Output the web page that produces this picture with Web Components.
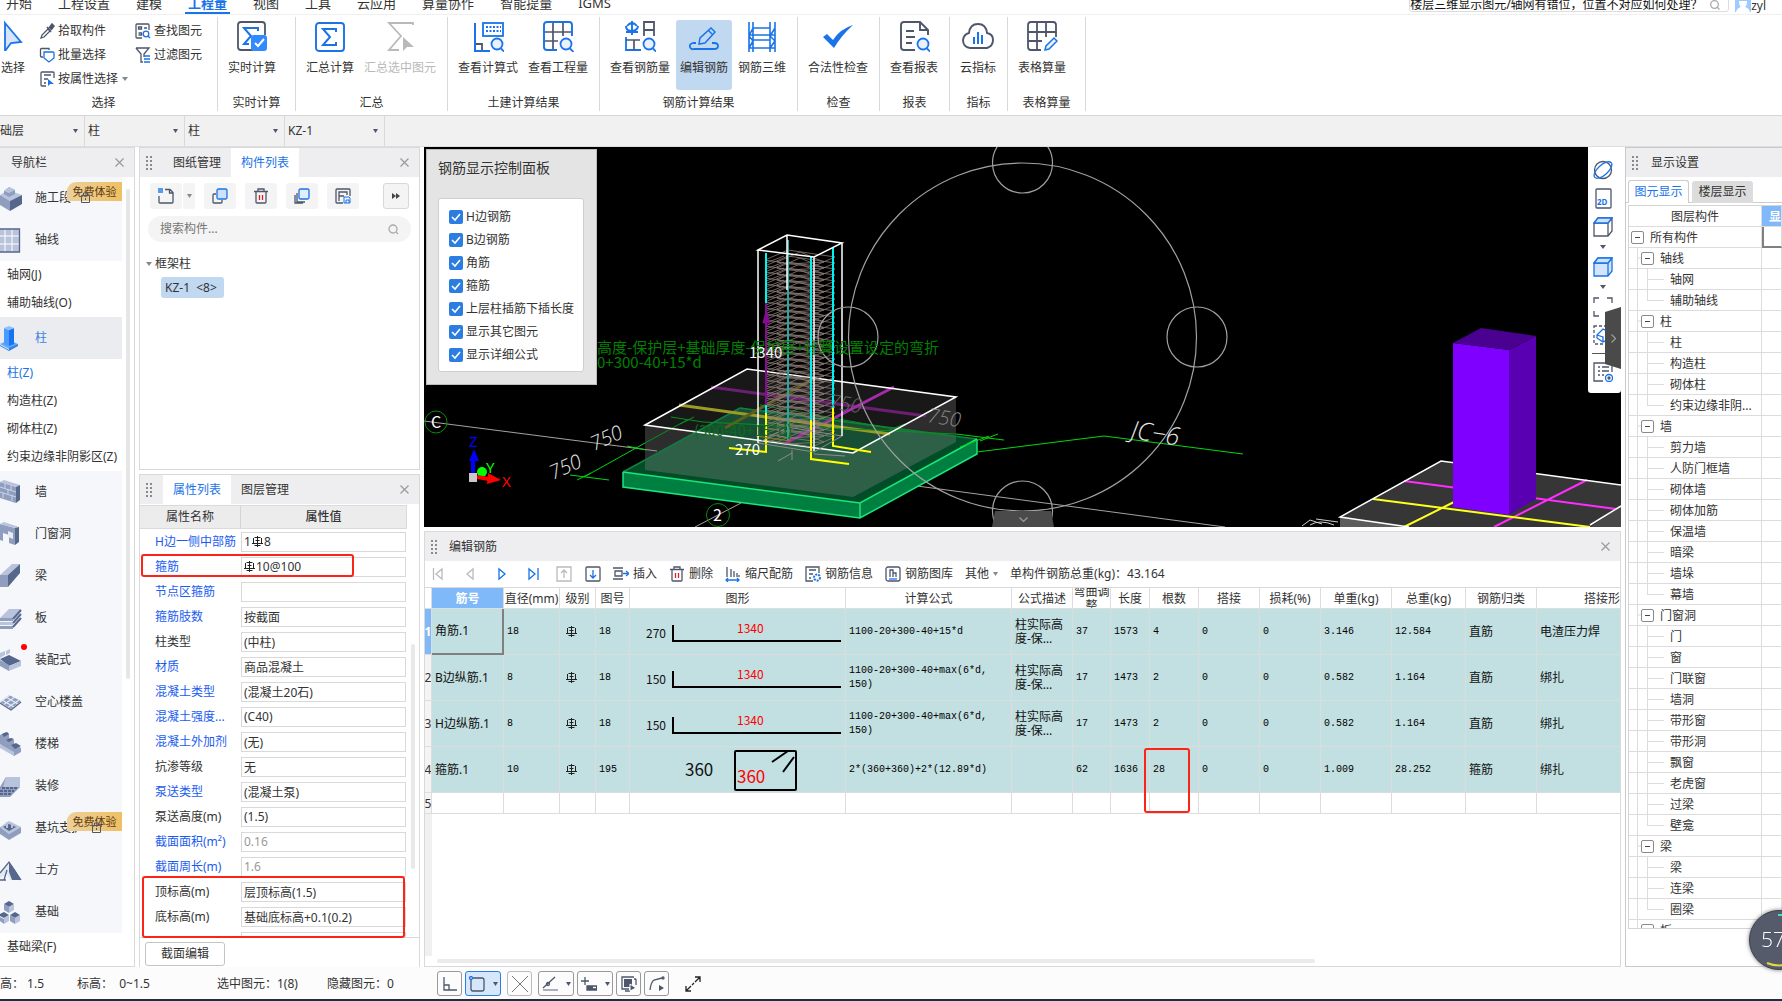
<!DOCTYPE html>
<html lang="zh-CN">
<head>
<meta charset="utf-8">
<title>编辑钢筋</title>
<style>
html,body{margin:0;height:100%;overflow:hidden}
body{font:12px/16px "Noto Sans","Noto Sans CJK SC",sans-serif;color:#333;background:#fff;
--blue:#1a73e8;--ink:#4d566b;--line:#d9d9d9;--head:#eeeef0;--sel:#c1d8f1}
</style>
</head>
<body>
<app-shell></app-shell>
<script>
const RESET=`*{box-sizing:border-box}button,input,select{font:inherit;color:inherit;background:none;border:0;padding:0;margin:0;outline:0}a{color:inherit;text-decoration:none}svg{display:block;flex:none}`;
function define(name,css,render){
  customElements.define(name,class extends HTMLElement{
    constructor(){super();this.attachShadow({mode:'open'});}
    connectedCallback(){
      this.shadowRoot.innerHTML=`<style>${RESET}${css}</style>`+(typeof render==='function'?render(this):render);
    }
  });
}
const svg=(w,h,body,extra='')=>`<svg width="${w}" height="${h}" viewBox="0 0 ${w} ${h}" fill="none" stroke="#4d566b" stroke-width="1.3" ${extra}>${body}</svg>`;
const B='#1a73e8';
const CARET=svg(7,4,'<path d="M1 0h6L4 4z" fill="#888" stroke="none"/>');
const CARET5=svg(5,4,'<path d="M0 0h5L2.500 4z" fill="#4d566b" stroke="none"/>');
const CLOSE=svg(9,9,'<path d="M.5.5l8 8M8.500.5l-8 8" stroke="#9a9a9a" stroke-width="1.200"/>');
const GRIP=svg(6,14,'<path d="M1 0v14M5 0v14" stroke="#8a8a8a" stroke-width="2" stroke-dasharray="2 2"/>');
/* rebar grade mark: barred circle standing on a line */
const REBAR=svg(11,11,'<path d="M5.500 0v11M0 7.500h11M2.500 1.500h6M2.500 9.500h6M1.500 2v5M9.500 2v5M3.500 4.500h4" stroke="#222" stroke-width="1"/>');

/* ---------- ribbon icons, 32 x 32 ---------- */
const MAG=(x,y,r=5.5)=>`<circle cx="${x}" cy="${y}" r="${r}" stroke="${B}" stroke-width="1.800" fill="#e8f1fd"/><path d="M${x+r-1.5} ${y+r-1}l3.500 3.500" stroke="${B}" stroke-width="1.800"/>`;
const BIG={
 live:`<path d="M17 30H5q-3 0-3-3V5q0-3 3-3h21q3 0 3 3v10" stroke-width="1.800"/><path d="M22 11V8H8l7 8-7 8h5" stroke="${B}" stroke-width="2"/><rect x="15" y="15" width="16" height="16" rx="3" fill="#2f8bff" stroke="none"/><path d="M19 23l3 3 6-7" stroke="#fff" stroke-width="2"/>`,
 sum:`<rect x="2" y="3" width="28" height="28" rx="3" stroke="${B}" stroke-width="1.900"/><path d="M22 12V9H9l7 8-7 8h13v-3" stroke="${B}" stroke-width="2"/>`,
 sumsel:`<path d="M29 5V3H5l12 13L5 30h10" stroke="#b9b9b9" stroke-width="1.800"/><path d="M19 17v14l4-4h7z" fill="#b9b9b9" stroke="none"/>`,
 formula:`<path d="M3 24h7v7" stroke-width="1.800"/><path d="M3 3v28h15" stroke="${B}" stroke-width="2"/><rect x="11" y="3" width="20" height="13" stroke="${B}" stroke-width="1.800"/><path d="M14 7h15M14 11h15" stroke="${B}" stroke-width="2" stroke-dasharray="2 1.500"/>`+MAG(25,24),
 qty:`<path d="M2 12h28M2 21h14M11 2v28M21 2v14" stroke-width="1.700"/><path d="M15 30H5q-3 0-3-3V5q0-3 3-3h22q3 0 3 3v11" stroke="${B}" stroke-width="1.900"/>`+MAG(24,24),
 steel:`<path d="M8 1v14M2 6q0 5 6 5M14 6q0 4-6 5M3 6q5-6 10 0M2 12h12" stroke="${B}" stroke-width="1.900"/><path d="M20 16V2h10v14M20 10h10" stroke-width="1.800"/><path d="M2 17v13h15" stroke="${B}" stroke-width="1.800"/><path d="M2 20h14M10 20v10" stroke-width="1.700"/>`+MAG(25,24),
 edit:`<path d="M8 23H5q-4 1-3 4t4 2h20q4 0 4-3t-4-3h-2" stroke="${B}" stroke-width="1.800"/><path d="M11 24l1-6L23 8l4 4-10 11zM20 10l4 4" stroke="${B}" stroke-width="1.500"/>`,
 three:`<path d="M3 2v30M7 2v30M24 2v30M29 2v30M7 8h17M3 15h26M7 20h17M3 28h26M7 8l-4 8 4 5-4 7M29 8l-5 8 5 5-5 7" stroke="${B}" stroke-width="1.600"/>`,
 check:`<path d="M1 17l4-3 6 6Q18 9 31 5 19 16 12 28z" fill="${B}" stroke="none"/>`,
 report:`<path d="M17 30H6q-3 0-3-3V5q0-3 3-3h16l8 8v5M22 2v8h8M8 11h8M8 17h9M8 23h6" stroke-width="1.900"/>`+MAG(25,24),
 cloud:`<path d="M8 28q-7-1-7-8 1-6 6-7 1-9 9-9t9 9q6 1 6 7t-6 8z" stroke-width="1.900"/><path d="M12 17v7M16 12v12M20 15v9" stroke="${B}" stroke-width="2"/>`,
 table:`<path d="M15 30H5q-3 0-3-3V5q0-3 3-3h22q3 0 3 3v12M2 12h28M2 21h14M11 2v28M20 2v15" stroke-width="1.800"/><path d="M19 30l1-4 8-8 3 3-8 8z" stroke="${B}" stroke-width="1.500" fill="#e8f1fd"/>`
};
const SMALL={
 pick:`<path d="M2 15l1-3 6-6 2 2-6 6z" stroke-width="1.300"/><path d="M8 4l4 5M10 5l3-4 2 2-3 4" stroke-width="1.500" fill="#4d566b"/>`,
 batch:`<path d="M10 3V1.500H2.500q-1 0-1 1V9q0 1 1 1H4"/><path d="M5 5h9q1 0 1 1v5l-5 4-5-4z" stroke="${B}" fill="#fff"/>`,
 prop:`<path d="M7 15H3q-1 0-1-1V2q0-1 1-1h11q1 0 1 1v5M5 4h7M5 8h4M5 12h2"/><path d="M9 8v7l2-2h4z" fill="${B}" stroke="none"/>`,
 find:`<path d="M7 15H2q-1 0-1-1V2q0-1 1-1h11q1 0 1 1v5M3.500 4h3v2h-3zM9 5h3M3.500 10h3v2h-3"/><circle cx="11" cy="11" r="2.800" stroke="${B}"/><path d="M13 13l2 2" stroke="${B}"/>`,
 filter:`<path d="M1 1h13L9 7v3M1 1l5 6v8h2"/><path d="M9 9h6M9 12h6M9 15h6" stroke="${B}"/>`
};

define('top-tabs',`:host{display:flex;justify-content:space-between;height:15px;overflow:hidden;border-bottom:1px solid #f0f0f0;flex:none}
nav{display:flex;gap:26px;align-items:flex-end;padding-left:6px;font-size:13px;line-height:14px}
a{padding-bottom:4px;height:18px;margin-top:-4px;position:relative}
a.on{color:var(--blue);font-weight:600}a.on:after{content:"";position:absolute;left:-3px;right:-3px;bottom:0;height:2px;background:var(--blue)}
.right{display:flex;align-items:flex-end;padding-right:16px;gap:6px}
.box{display:flex;align-items:center;width:320px;height:20px;border:1px solid #ddd;border-radius:3px;margin-bottom:2px;padding:5px 8px 0 0}
input{flex:1;color:#111;height:16px;min-width:0}
.user{display:flex;align-items:flex-end}.user span{line-height:16px}`,
`<nav>${['开始','工程设置','建模','工程量','视图','工具','云应用','算量协作','智能提量','IGMS'].map((t,i)=>`<a href="#" class="${i==3?'on':''}">${t}</a>`).join('')}</nav>
<div class="right"><div class="box"><input aria-label="搜索" value="楼层三维显示图元/轴网有错位，位置不对应如何处理？">${svg(10,10,'<circle cx="4.500" cy="4.500" r="3.800" stroke="#aaa"/><path d="M7 7l2.500 2.500" stroke="#aaa"/>')}</div>
<div class="user">${svg(16,16,'<path d="M0 0h16v14H0z" fill="#9ecbff" stroke="none"/><path d="M4 3h8q0 5-2 6 4 1 5 5H1q1-4 5-5Q4 8 4 3z" fill="#fff" stroke="none"/>')}<span>zyl</span></div></div>`);

define('ribbon-item',`:host{display:block}button{display:flex;flex-direction:column;align-items:center;width:100%;height:70px;padding:0 4px;border-radius:3px;white-space:nowrap}
button.on{background:var(--sel)}button:disabled{color:#b9b9b9}span{margin-top:8px}`,
 h=>`<button class="${h.hasAttribute('on')?'on':''}" ${h.hasAttribute('off')?'disabled':''}>${svg(32,32,BIG[h.getAttribute('icon')])}<span><slot></slot></span></button>`);
define('ribbon-small',`:host{display:block}button{display:flex;align-items:center;gap:3px;height:24px;white-space:nowrap}`,
 h=>`<button>${svg(16,16,SMALL[h.getAttribute('icon')])}<slot></slot>${h.hasAttribute('menu')?CARET:''}</button>`);
define('ribbon-group',`:host{display:flex;flex-direction:column;border-right:1px solid var(--line);height:94px;flex:none}
div{display:flex;gap:2px;padding:3px 6px 0;height:79px}footer{text-align:center;line-height:16px}:host([wide]) footer{padding-right:10px}:host([wide]) div{padding-top:2px}`,
 h=>`<div><slot></slot></div><footer>${h.getAttribute('label')}</footer>`);
define('app-ribbon',`:host{display:flex;height:101px;padding-top:2px;border-bottom:1px solid #d4d4d4;flex:none}
.pick{display:flex;flex-direction:column;align-items:center;width:26px;gap:9px;padding-top:1px;margin-left:-6px;white-space:nowrap}
.cols{display:flex;gap:7px;margin-left:11px}`,
`<ribbon-group wide label="选择" style="width:218px"><button class="pick">${svg(22,31,`<path d="M3 3l16 19-10 1-6 8z" fill="#d6e5fb" stroke="${B}" stroke-width="1.800"/>`)}<span>选择</span></button>
<div class="cols"><div><ribbon-small icon="pick">拾取构件</ribbon-small><ribbon-small icon="batch">批量选择</ribbon-small><ribbon-small icon="prop" menu>按属性选择</ribbon-small></div>
<div><ribbon-small icon="find">查找图元</ribbon-small><ribbon-small icon="filter">过滤图元</ribbon-small></div></div></ribbon-group>
<ribbon-group label="实时计算" style="width:78px"><ribbon-item icon="live">实时计算</ribbon-item></ribbon-group>
<ribbon-group label="汇总" style="width:152px"><ribbon-item icon="sum">汇总计算</ribbon-item><ribbon-item icon="sumsel" off>汇总选中图元</ribbon-item></ribbon-group>
<ribbon-group label="土建计算结果" style="width:152px"><ribbon-item icon="formula">查看计算式</ribbon-item><ribbon-item icon="qty">查看工程量</ribbon-item></ribbon-group>
<ribbon-group label="钢筋计算结果" style="width:198px"><ribbon-item icon="steel">查看钢筋量</ribbon-item><ribbon-item icon="edit" on>编辑钢筋</ribbon-item><ribbon-item icon="three">钢筋三维</ribbon-item></ribbon-group>
<ribbon-group label="检查" style="width:82px"><ribbon-item icon="check">合法性检查</ribbon-item></ribbon-group>
<ribbon-group label="报表" style="width:70px"><ribbon-item icon="report">查看报表</ribbon-item></ribbon-group>
<ribbon-group label="指标" style="width:58px"><ribbon-item icon="cloud">云指标</ribbon-item></ribbon-group>
<ribbon-group label="表格算量" style="width:78px"><ribbon-item icon="table">表格算量</ribbon-item></ribbon-group>`);

define('selector-bar',`:host{display:flex;height:31px;background:#f1f1f1;border-bottom:1px solid #dedede;flex:none}
label{display:flex;align-items:center;width:100px;border-right:1px solid #d9d9d9;padding:0 6px 0 3px}label:first-of-type{width:85px;padding-left:0}
select{appearance:none;flex:1;min-width:0;height:20px}`,
 `${['础层','柱','柱','KZ-1'].map((t,i)=>`<label><select aria-label="${['楼层','分类','构件类型','构件'][i]}"><option>${t}</option></select>${CARET5}</label>`).join('')}`);

/* ---------- module navigation ---------- */
const D='#56678c',M='#8f9ebf',L='#b9c4dc';
const f=(d,c)=>`<path d="${d}" fill="${c}" stroke="none"/>`;
const NAV={
 stage:f('M0 9l8-5 14 5-12 6z',L)+f('M0 9l10 6v10L0 19z',M)+f('M22 9v9l-12 7V15z',D)+f('M4 5l5-4 6 3v4l-6 3-5-3z',M)+f('M4 5l5-4 6 3-6 3z',L),
 axis:f('M0 1h20v23H0z',L)+'<path d="M0 8h20M0 16h20M5 1v23M12 1v23" stroke="#fff" stroke-width="1"/><path d="M0 1h19.500v23H0" stroke="#56678c"/>',
 column:f('M0 18l9-4 9 4-9 5z','#5fa8ff')+f('M0 19l9 5v-2l9-4v2l-9 5-9-5z','#2f7fe8')+f('M4 2l5 2v16l-5-2z','#4a9bff')+f('M9 4l5-2v16l-5 2z','#1a73f0')+f('M4 2l5-2 5 2-5 2z','#8cc0ff'),
 wall:f('M0 2l16 5v16L0 18z',M)+f('M0 2l4-2 16 5-4 2z',L)+f('M16 7l4-2v15l-4 3z',D)+'<path d="M0 7l16 5M0 12l16 5M5 4v4M11 6v4M8 9v5M3 13v5M12 15v6" stroke="#dbe2f0" stroke-width=".8"/>',
 door:f('M0 2l15 4v17l-6-2v-8l-6-2v8l-3-1z',M)+f('M0 2l4-2 15 5-4 1z',L)+f('M15 6l4-1v15l-4 3z',D)+f('M8 9l5 2v6l-5-2z','#e6ebf5'),
 beam:f('M0 11L12 0h8L8 11z',L)+f('M0 11h8v12H0z',M)+f('M8 11L20 0v9L8 23z',D),
 slab:f('M0 12L9 3h12l-8 9z',L)+f('M0 12h13v3H0zM0 20h13v3H0z',M)+f('M0 16h13v3H0z',L)+'<path d="M13 13l8-9M13 17l8-9M13 21l8-9" stroke="#56678c" stroke-width="2"/>',
 precast:f('M0 11l9-4 12 6-12 5z',D)+f('M0 12l9 5v6l-9-5z',M)+f('M21 13v5l-12 5v-5z',L)+f('M0 5l5-2v4l-5 3zM6 3l4-2v4L6 7z',L),
 hollow:f('M0 12l9-7 12 6-10 8z',M)+'<path d="M2 10l12 7M6 7l12 7M3 15l12-8M0 12l10-7M7 18l12-8" stroke="#e6ebf5" stroke-width="1.200"/><path d="M0 13l11 7 10-8" stroke="#56678c"/>',
 stairs:f('M0 3l6-3 3 2v4l5 2v4l7 4v4l-7 4L0 12z',M)+f('M2 2l5-2 2 2-5 3zM6 8l5-2 3 1-5 3zM11 13l5-2 5 3-6 3z',D)+f('M0 12l14 8v4L0 16z',L),
 finish:f('M0 13L6 3h14v10L10 23H0z',M)+f('M6 3h14v10H3z',L)+'<path d="M2 14h15M0 17h14M0 20h11" stroke="#56678c" stroke-width="2" stroke-dasharray="3 1"/>',
 pit:f('M0 11l9-6 12 6-12 7z',L)+f('M0 11l9 7v6l-9-6z',M)+f('M21 11v6L9 24v-6z',M)+f('M3 11l6-3 7 3-7 4z',D)+f('M6 6h2v6H6zM11 7h2v5h-2z',L),
 earth:f('M0 14L9 4l4 6 8 12H10l-3-6-7 4z','#e3e8f2')+f('M9 4l6 8 6 10h-9L9 14z',D)+'<path d="M0 15L9 4l12 18M0 22h6M7 12l-3 10" stroke="#56678c"/>',
 base:f('M4 4l5-3 5 3-5 3z',D)+f('M4 4l5 3v6l-5-3z',M)+f('M14 4v6l-5 3V7z',L)+f('M0 14l4-2 5 3-5 3-4-2z',D)+f('M0 17l4 2v5l-4-3z',M)+f('M9 15v6l-5 3v-6z',L)+f('M10 15l5-3 5 3-5 3z',D)+f('M10 15l5 3v6l-5-3z',M)+f('M20 15v6l-5 3v-6z',L)
};
define('nav-item',`:host{display:block}a{display:flex;align-items:center;height:42px;background:#f5f7fa;position:relative;white-space:nowrap}
a.on{background:#ebecf0;color:#3f7fe6}svg.i{width:23px;margin-right:12px}
b{position:absolute;right:0;top:5px;height:19px;line-height:19px;width:55px;text-align:center;font-weight:400;font-size:11px;color:#5e3a12;background:linear-gradient(90deg,#ecd09a,#eec063);border-radius:9px 0 0 0}
.lock{position:absolute;top:15px}.dot{position:absolute;left:21px;top:5px;width:6px;height:6px;border-radius:3px;background:#f00}`,
 h=>`<a href="#" class="${h.hasAttribute('on')?'on':''}">${svg(23,25,NAV[h.getAttribute('icon')],'class="i"')}<slot></slot>${h.hasAttribute('trial')?`<b>免费体验</b>${svg(9,11,'<path d="M.5 3.500h8v7h-8zM2.500 3V1h4v2M4.500 6v2" stroke-width="1"/>',`class="lock" style="left:${h.getAttribute('trial')}px"`)}`:''}${h.hasAttribute('dot')?'<i class="dot"></i>':''}</a>`);
define('nav-sub',`:host{display:block}a{display:block;height:28px;line-height:28px;padding-left:7px;white-space:nowrap;background:#fff}a.on{color:var(--blue)}`,
 h=>`<a href="#" class="${h.hasAttribute('on')?'on':''}"><slot></slot></a>`);
define('nav-panel',`:host{display:flex;flex-direction:column;width:135px;border:1px solid var(--line);border-left:0;flex:none;background:#fff}
header{display:flex;justify-content:space-between;align-items:center;height:29px;background:var(--head);padding:0 10px 0 11px;flex:none}
.body{display:flex;gap:4px;flex:1;min-height:0;overflow:hidden}.list{width:122px}.bar{width:4px;height:490px;margin-top:12px;border-radius:2px;background:#e6e6e6}`,
`<header><span>导航栏</span><button aria-label="关闭">${CLOSE}</button></header><div class="body"><div class="list">
<nav-item icon="stage" trial="81">施工段</nav-item><nav-item icon="axis">轴线</nav-item>
<nav-sub>轴网(J)</nav-sub><nav-sub>辅助轴线(O)</nav-sub>
<nav-item icon="column" on>柱</nav-item>
<nav-sub on>柱(Z)</nav-sub><nav-sub>构造柱(Z)</nav-sub><nav-sub>砌体柱(Z)</nav-sub><nav-sub>约束边缘非阴影区(Z)</nav-sub>
${[['wall','墙'],['door','门窗洞'],['beam','梁'],['slab','板'],['precast','装配式','dot'],['hollow','空心楼盖'],['stairs','楼梯'],['finish','装修'],['pit','基坑支护','trial="92"'],['earth','土方'],['base','基础']].map(a=>`<nav-item icon="${a[0]}" ${a[2]||''}>${a[1]}</nav-item>`).join('')}
<nav-sub>基础梁(F)</nav-sub></div><div class="bar"></div></div>`);

define('tab-header',`:host{display:flex;align-items:center;height:29px;background:var(--head);padding:0 10px 0 6px;flex:none}
.tabs{display:flex;flex:1;height:100%;margin-left:11px}button.t{width:68px;height:100%}button.on{background:#fff;color:var(--blue)}`,
 h=>`${GRIP}<div class="tabs">${h.getAttribute('tabs').split(',').map((t,i)=>`<button class="t ${i==h.getAttribute('active')?'on':''}">${t}</button>`).join('')}</div><button aria-label="关闭">${CLOSE}</button>`);

define('component-panel',`:host{display:block;height:323px;border:1px solid var(--line);background:#fff;flex:none}
.tools{display:flex;gap:9px;padding:6px 10px 0}.tools button{display:flex;align-items:center;justify-content:center;width:32px;height:26px;background:#f4f4f5;border-radius:3px}
.pair{display:flex;gap:1px}.tools .dd{width:12px}.tools .more{width:26px;margin-left:auto;border:1px solid #d8d8d8}
.search{display:flex;align-items:center;height:26px;margin:7px 8px 0;padding:0 12px;border-radius:13px;background:#f4f4f4}.search input{flex:1;min-width:0}.search input::placeholder{color:#777;opacity:1}
.root{display:flex;align-items:center;gap:3px;margin:14px 0 5px 6px}.sel{display:inline-block;height:21px;line-height:21px;margin-left:21px;padding:0 4px;background:var(--sel);border-radius:3px;width:63px;white-space:pre}`,
`<tab-header tabs="图纸管理,构件列表" active="1"></tab-header><div class="tools">
<div class="pair"><button aria-label="新建">${svg(16,16,`<path d="M7 1.500h5l3 3V14q0 1-1 1H2q-1 0-1-1V8M11.500 1.500V5H15"/><path d="M0 0h5v5H0z" fill="${B}" stroke="none" opacity=".7"/>`)}</button><button class="dd" aria-label="新建菜单">${svg(5,4,'<path d="M0 0h5L2.500 4z" fill="#888" stroke="none"/>')}</button></div>
<button aria-label="复制">${svg(16,16,`<path d="M4 6H2q-1 0-1 1v7q0 1 1 1h7q1 0 1-1v-2"/><rect x="5" y="1" width="10" height="10" rx="1.500" fill="#cfe1fa" stroke="${B}"/>`)}</button>
<button aria-label="删除">${svg(16,16,'<path d="M1 3.500h14M5 3V1h6v2M3 4v10q0 1 1 1h8q1 0 1-1V4"/><path d="M6.500 7v5M9.500 7v5" stroke="#e02020"/>')}</button>
<button aria-label="层间复制">${svg(16,16,`<path d="M3 5v9h8M1 7v8h8"/><rect x="5" y="1" width="10" height="10" rx="1.500" fill="#e3eefc" stroke="${B}"/>`)}</button>
<button aria-label="存档">${svg(16,16,`<path d="M8 15H2q-1 0-1-1V2q0-1 1-1h12q1 0 1 1v6M4 13V4h8v3M4 8h5"/><path d="M9 9h5l1 1v5H9zM11 15v-3h3v3" stroke="${B}" stroke-width="1"/>`)}</button>
<button class="more" aria-label="更多">${svg(8,6,'<path d="M0 0l4 3-4 3zM4 0l4 3-4 3z" fill="#444" stroke="none"/>')}</button></div>
<div class="search"><input aria-label="搜索构件" placeholder="搜索构件...">${svg(11,11,'<circle cx="5" cy="5" r="4" stroke="#aaa"/><path d="M8 8l2 2" stroke="#aaa"/>')}</div>
<div class="root">${svg(6,4,'<path d="M0 0h6L3 4z" fill="#888" stroke="none"/>')}框架柱</div><div class="sel">KZ-1  &lt;8&gt;</div>`);

define('prop-row',`:host{display:flex;height:25px;align-items:center}
label{width:101px;padding-left:15px;white-space:nowrap;overflow:hidden}:host([link]) label{color:#1a5cf0}
.f{flex:1;min-width:0;display:flex;align-items:center;height:20px;border:1px solid var(--line);padding:0 2px;gap:1px}
input{flex:1;min-width:0;height:18px}:host([dim]) input{color:#999}`,
 h=>{const b=h.hasAttribute('bar');return `<label for="v">${h.getAttribute('name')}</label><div class="f">${b?`${h.getAttribute('bar')?`<span>${h.getAttribute('bar')}</span>`:''}${REBAR}`:''}<input id="v" value="${h.getAttribute('value')||''}"></div>`});
define('property-panel',`:host{display:flex;flex-direction:column;flex:1;min-height:0;border:1px solid var(--line);border-bottom:0;background:#fff;position:relative}
.grid{flex:1;min-height:0;display:flex;overflow:hidden;border-bottom:1px solid var(--line)}.rows{width:267px;padding-right:1px}
.h{display:flex;height:24px;line-height:22px;text-align:center;background:#ececed;border:1px solid #dadada;border-left:0;margin-right:-1px;margin-top:1px}.h span{width:101px;border-right:1px solid #d5d5d5}.h b{flex:1;font-weight:500}
.bar{width:4px;height:225px;margin:140px 0 0 4px;border-radius:2px;background:#e8e8e8}
footer{height:29px;padding:4px 5px 0}footer button{width:80px;height:24px;border:1px solid #c4c4c4;border-radius:3px}
.mark{position:absolute;border:2px solid #fb2419;border-radius:3px;pointer-events:none}`,
`<tab-header tabs="属性列表,图层管理" active="0"></tab-header><div class="grid"><div class="rows"><div class="h"><span>属性名称</span><b>属性值</b></div>
<prop-row link name="H边一侧中部筋" bar="1" value="8"></prop-row><prop-row link name="箍筋" bar value="10@100"></prop-row><prop-row link name="节点区箍筋"></prop-row><prop-row link name="箍筋肢数" value="按截面"></prop-row><prop-row name="柱类型" value="(中柱)"></prop-row><prop-row link name="材质" value="商品混凝土"></prop-row><prop-row link name="混凝土类型" value="(混凝土20石)"></prop-row><prop-row link name="混凝土强度..." value="(C40)"></prop-row><prop-row link name="混凝土外加剂" value="(无)"></prop-row><prop-row name="抗渗等级" value="无"></prop-row><prop-row link name="泵送类型" value="(混凝土泵)"></prop-row><prop-row name="泵送高度(m)" value="(1.5)"></prop-row><prop-row link dim name="截面面积(m²)" value="0.16"></prop-row><prop-row link dim name="截面周长(m)" value="1.6"></prop-row><prop-row name="顶标高(m)" value="层顶标高(1.5)"></prop-row><prop-row name="底标高(m)" value="基础底标高+0.1(0.2)"></prop-row><prop-row name=""></prop-row></div><div class="bar"></div></div>
<footer><button>截面编辑</button></footer><i class="mark" style="left:1px;top:79px;width:213px;height:23px"></i><i class="mark" style="left:2px;top:401px;width:263px;height:62px"></i>`);

/* ---------- 3D view ---------- */
function hoops(){
  let s='';
  for(let y=260;y<442;y+=6){
    s+=`M765 ${y}L812 ${y+7}L835 ${y-3}L788 ${y-10}ZM777 ${y+2}L800 ${y-8}L824 ${y+2}L788 ${y+4}ZM766 ${y+3}L784 ${y-4}`;
  }
  return s;
}
const SCENE=`<svg class="scene" viewBox="424 147 1197 380" preserveAspectRatio="xMinYMin slice" fill="none" stroke-width="1">
<path d="M424 421L657 451M917 486L1225 527M695 527L741 503" stroke="#a9a0a0"/>
<path d="M623 472L740 408L977 439L860 503Z" fill="#014d27"/><path d="M623 472L860 503V518L623 487ZM860 503L977 439V454L860 518Z" fill="#008040"/>
<path d="M645 425L853 453V497L645 470ZM853 453L956 397V442L853 497Z" fill="#8a8a8a" fill-opacity=".33"/><path d="M645 425L747 369L956 397L853 453Z" fill="#555" fill-opacity=".28"/>
<path d="M740 408L977 439M623 472L645 460" stroke="#12803f" stroke-width="1.500"/><path d="M977 439L860 503L623 472M623 472V487L860 518L977 454V439M860 503V518" stroke="#1be57b" stroke-width="1.500"/><path d="M645 460L740 408" stroke="#127a44" stroke-width="1.500"/>
<path d="M711 387L926 416" stroke="#6b1f70" stroke-width="3"/><path d="M894 387L784 444" stroke="#a62bab" stroke-width="3"/><path d="M679 405L890 434" stroke="#9d9a26" stroke-width="3"/><path d="M815 378L725 428" stroke="#5f5c20" stroke-width="3"/>
<path d="M584 477L645 443M570 475L609 480M627 446L646 450M956 434L1004 440M977 452L1104 436L1243 454M577 480L591 473M980 441L998 434M960 447L989 436" stroke="#00d80e"/>
<path d="M645 443L687 420M671 417L703 422L956 434M680 424L694 417M889 430L905 424M760 405L889 428" stroke="#0a8f1c"/>
<path d="M645 425L747 369L956 397L853 453Z" stroke="#fff" stroke-width="1.500"/>
<path d="${hoops()}" stroke="#8d7c76" stroke-width=".8"/>
<path d="M766 253V413M811 257V420M833 247V408" stroke="#00f2f2" stroke-width="2"/><path d="M788 240V440" stroke="#26a8a0" stroke-width="2"/>
<path d="M766 303V405" stroke="#8a0a96" stroke-width="2"/><path d="M763 323L766 311L770 323Z" fill="#8a0a96" stroke="#8a0a96"/>
<path d="M766 413V452L729 448M811 420V459L849 464M833 408V446L871 452" stroke="#ffff00" stroke-width="2"/><path d="M756 436L790 441V422" stroke="#927d16"/>
<path d="M758 443L814 452L842 436M758 443L786 428M787 427L842 436M792 460V450M778 461L792 453M814 454L845 456" stroke="#8c8c8c"/>
<path d="M758 250L787 235L842 243L814 257ZM758 250V443M787 235V290M814 257V451M842 243V436" stroke="#fff" stroke-width="1.500"/>
<g stroke="#a0a0a0" stroke-width="1.200"><circle cx="1022.500" cy="337" r="174"/><circle cx="1022.500" cy="163" r="30"/><circle cx="848" cy="337" r="30"/><circle cx="1197" cy="337" r="30"/><circle cx="1022.500" cy="511" r="30"/></g>
<circle cx="436" cy="422" r="11" stroke="#0a8a0a"/><circle cx="718" cy="515" r="11.500" stroke="#0a8a0a"/>
<g font-family="Noto Sans CJK SC,sans-serif" font-size="15" stroke="none"><text x="597" y="353" fill="#008000">高度-保护层+基础厚度-保护层+计算设置设定的弯折</text><text x="597" y="368" fill="#008000">0+300-40+15*d</text><text x="694" y="436" fill="#0d6a1c">(300-40+15*d)</text>
<text x="749" y="358" fill="#f4f4f4">1340</text><text x="735" y="455" fill="#fff">270</text><text x="431" y="428" fill="#fff" font-size="16">C</text><text x="713" y="521" fill="#fff" font-size="16">2</text></g>
<g font-family="Open Sans,sans-serif" font-weight="300" font-style="italic" font-size="20" stroke="none" fill="#e8e8e8"><text transform="translate(594 451) rotate(-24)">750</text><text transform="translate(553 480) rotate(-24)">750</text><text fill="#888" transform="translate(927 422) rotate(9)">750</text><text fill="#666" transform="translate(828 408) rotate(9)">750</text><text transform="translate(1130 438) rotate(9)" font-size="25">JC−6</text></g>
<path d="M473 476V460" stroke="#00f" stroke-width="4"/><path d="M469 461L474 449L479 461Z" fill="#00f"/><circle cx="482" cy="472" r="5" fill="#0f0"/><path d="M477 477L489 479" stroke="#f00" stroke-width="4"/><path d="M488 473L501 480L487 484Z" fill="#f00"/><path d="M469 473h8v9h-8z" fill="#c8c8c8"/>
<g font-family="Noto Sans,sans-serif" font-size="15" stroke="none"><text x="469" y="447" fill="#00f">Z</text><text x="486" y="473" fill="#0f0">Y</text><text x="502" y="487" fill="#f00">X</text></g>
<path d="M1340 517L1441 461L1621 485V506L1590 527H1409Z" fill="#363636"/><path d="M1340 517V527H1409Z" fill="#5c5c5c"/><path d="M1590 527L1621 506V527Z" fill="#484848"/>
<path d="M1404 481L1616 509M1587 480L1494 527" stroke="#ff2cff" stroke-width="2"/><path d="M1373 499L1590 527M1460 499L1404 527" stroke="#ffff20" stroke-width="2"/>
<path d="M1409 527L1340 517L1441 461L1621 485M1590 525L1621 506" stroke="#fff" stroke-width="1.500"/><path d="M1302 526l8-6 12 4M1316 519l22 3M1310 525q10-6 24 0" stroke="#ccc"/>
<path d="M1453 343L1509 350V515L1453 507Z" fill="#7f00ff"/><path d="M1509 350L1536 336V499L1509 515Z" fill="#5900b3"/><path d="M1453 343L1481 328L1536 336L1509 350Z" fill="#4a0091"/>
</svg>`;
const cube=(c)=>svg(20,20,`<path d="M1 6l4-5h14v13l-4 5H1zM1 6h14v13M15 6l4-5" stroke="${c?B:'#4d566b'}" fill="${c?'#d3e4fb':'none'}"/><path d="M1 6l4-5h14l-4 5z" fill="#cfe1fa" stroke="${B}"/>`);
const DOWN=svg(6,4,'<path d="M0 0h6L3 4z" fill="#4d566b" stroke="none"/>');
define('view-tools',`:host{display:flex;flex-direction:column;align-items:center;gap:8px;width:33px;height:246px;background:#fff;border-radius:0 0 3px 3px;padding:13px 3px 0 0}
button{display:flex}hr{width:22px;height:1px;background:#555;border:0;margin:0;flex:none}`,
`<button aria-label="动态观察">${svg(20,20,`<circle cx="10" cy="10" r="8.500"/><ellipse cx="10" cy="10" rx="11" ry="5" transform="rotate(-42 10 10)" stroke="${B}"/>`)}</button>
<button aria-label="二维">${svg(20,21,`<rect x="3" y="1" width="15" height="19" rx="1"/><text x="4" y="17" font-size="8" font-weight="700" fill="${B}" stroke="none" font-family="Noto Sans,sans-serif">2D</text>`)}</button>
<button aria-label="视图">${cube(0)}</button><div>${DOWN}</div>
<button aria-label="实体">${cube(1)}</button><div>${DOWN}</div>
<button aria-label="全屏">${svg(20,20,'<path d="M1 6V1h5M14 1h5v5M1 14v5h5M14 19h5v-5"/>')}</button>
<button aria-label="局部">${svg(20,20,`<rect x="1" y="1" width="18" height="18" stroke-dasharray="3 2"/><path d="M4 10l6-6 6 3v7l-6 3-6-4zM4 10l6 2v5" stroke="${B}"/>`)}</button>
<hr>
<button aria-label="显示设置">${svg(20,20,`<path d="M10 19H1V1h18v9M5 5h2M9 5h7M5 9h2M9 9h7M5 13h2M9 13h2"/><circle cx="16" cy="16" r="3.500" stroke="${B}" fill="#fff"/><circle cx="16" cy="16" r="1" fill="${B}"/>`)}</button>`);
define('rebar-options',`:host{display:block;width:171px;height:236px;background:#e4e4e4;border:1px solid #bdbdbd;padding:9px 10px}
h2{font-size:14px;font-weight:400;line-height:18px;margin:0 0 21px 1px}
div{background:#fff;border:1px solid #cfcfcf;border-radius:3px;width:146px;height:174px;padding:6px 10px;margin-left:1px}
label{display:flex;align-items:center;gap:3px;height:23px;white-space:nowrap}
input{appearance:none;width:14px;height:14px;flex:none;border-radius:2px;background:#2b7de0 url("data:image/svg+xml,%3Csvg xmlns='http://www.w3.org/2000/svg' width='14' height='14'%3E%3Cpath d='M3 7l3 3 5-6' fill='none' stroke='white' stroke-width='1.6'/%3E%3C/svg%3E")}`,
`<h2>钢筋显示控制面板</h2><div>${['H边钢筋','B边钢筋','角筋','箍筋','上层柱插筋下插长度','显示其它图元','显示详细公式'].map(t=>`<label><input type="checkbox" checked>${t}</label>`).join('')}</div>`);
define('model-view',`:host{display:block;position:relative;flex:1;min-height:0;background:#000;overflow:hidden}.scene{display:block;width:100%;height:100%}
rebar-options{position:absolute;left:2px;top:2px}view-tools{position:absolute;right:0;top:0}
.side{position:absolute;right:0;top:160px;width:16px;height:62px;background:#4a4a4a;clip-path:polygon(0 5px,100% 0,100% 100%,0 57px);display:flex;align-items:center;justify-content:center}
.down{position:absolute;left:568px;bottom:0;width:62px;height:16px;background:#4a4a4a;clip-path:polygon(3px 0,59px 0,100% 100%,0 100%);display:flex;align-items:center;justify-content:center}`,
`${SCENE}<rebar-options></rebar-options><view-tools></view-tools><button class="side" aria-label="收起">${svg(5,9,'<path d="M.5.5l4 4-4 4" stroke="#999"/>')}</button><button class="down" aria-label="展开">${svg(9,5,'<path d="M.5.5l4 4 4-4" stroke="#999"/>')}</button>`);

/* ---------- rebar table ---------- */
const shape=(a)=>svg(215,45,`<path d="M43 16v16h168" stroke="#000" stroke-width="2"/><g font-family="Noto Sans CJK SC,sans-serif" font-size="12" stroke="none"><text x="16" y="29" fill="#111">${a}</text><text x="107" y="24" fill="#f00">1340</text></g>`);
const shape4=svg(215,45,'<rect x="105" y="4" width="61" height="39" rx="1" stroke="#000" stroke-width="2"/><path d="M142 15l16-11M153 25l11-15" stroke="#000" stroke-width="2"/><g font-family="Noto Sans CJK SC,sans-serif" font-size="17" stroke="none"><text x="55" y="29" fill="#111">360</text><text x="107" y="36" fill="#f00">360</text></g>');
const COLS=[['',7],['筋号',72],['直径(mm)',56],['级别',36],['图号',34],['图形',216],['计算公式',166],['公式描述',61],['弯曲调整',38],['长度',39],['根数',49],['搭接',61],['损耗(%)',61],['单重(kg)',71],['总重(kg)',74],['钢筋归类',71],['搭接形',84]];
const DESC='柱实际高<br>度-保…';
const ROWS=[['角筋.1','18',REBAR,'18',shape(270),'1100-20+300-40+15*d',DESC,'37','1573','4','0','0','3.146','12.584','直筋','电渣压力焊'],
['B边纵筋.1','8',REBAR,'18',shape(150),'1100-20+300-40+max(6*d,<br>150)',DESC,'17','1473','2','0','0','0.582','1.164','直筋','绑扎'],
['H边纵筋.1','8',REBAR,'18',shape(150),'1100-20+300-40+max(6*d,<br>150)',DESC,'17','1473','2','0','0','0.582','1.164','直筋','绑扎'],
['箍筋.1','10',REBAR,'195',shape4,'2*(360+360)+2*(12.89*d)','','62','1636','28','0','0','1.009','28.252','箍筋','绑扎']];
define('rebar-table',`:host{display:block;border-top:1px solid var(--line);flex:1;min-height:0;overflow:hidden;position:relative}
table{border-collapse:separate;border-spacing:0;table-layout:fixed;width:1196px}
th{height:21px;padding:0;border:solid #ddd;border-width:0 1px 1px 0;font-weight:400;background:#fff;overflow:hidden}
th div{display:flex;align-items:center;justify-content:center;height:20px;padding-top:1px;overflow:hidden;white-space:nowrap;text-align:center}th.wrap div{white-space:normal;line-height:14px}
th:last-child div{justify-content:flex-end}
thead th.on{background:#80b9fa;color:#fff;font-weight:700}
td{height:46px;padding:0 0 0 3px;border:solid #dcdcdc;border-width:0 1px 1px 0;background:#c2dfe1;color:#111;vertical-align:middle;line-height:14px;white-space:nowrap;overflow:hidden}
td.m{font:10px/14px "Liberation Mono",monospace;color:#000}td.g svg{margin-left:3px}td.s{padding:0}
td.cur{border-right:2px solid #808080;border-bottom:2px solid #808080}
tbody th{background:#f4f4f4;height:46px;text-align:center}tbody th.on{background:#80b9fa;color:#fff;font-weight:700}
tbody th div{margin:0 -2px;height:auto;overflow:visible}
tr.e td{height:21px;background:#fff;padding:0}tr.e th{height:21px}
.gut{width:7px;height:142px;background:#f0f0f0}.mark{position:absolute;left:719px;top:160px;width:46px;height:65px;border:2px solid #fb2419;border-radius:3px;pointer-events:none}`,
`<table><colgroup>${COLS.map(c=>`<col style="width:${c[1]}px">`).join('')}</colgroup><thead><tr>${COLS.map((c,i)=>`<th class="${i==1?'on':''} ${i==8?'wrap':''}"><div>${c[0]}</div></th>`).join('')}</tr></thead><tbody>
${ROWS.map((r,i)=>`<tr><th class="${i?'':'on'}"><div>${i+1}</div></th>${r.map((v,j)=>`<td class="${j==2?'g':j==4?'s':[0,6,14,15].includes(j)?'':'m'} ${!i&&!j?'cur':''}">${v}</td>`).join('')}</tr>`).join('')}
<tr class="e"><th><div>5</div></th>${'<td></td>'.repeat(16)}</tr></tbody></table><div class="gut"></div><i class="mark"></i>`);
const T=(ic,t)=>`<button>${svg(16,16,ic)}<span>${t}</span></button>`;
define('rebar-editor',`:host{display:flex;flex-direction:column;height:436px;border:1px solid var(--line);background:#fff;flex:none}
header{display:flex;align-items:center;height:29px;background:var(--head);padding:0 10px 0 6px;flex:none}header span{flex:1;margin-left:12px}
.tools{display:flex;align-items:center;height:26px;padding-left:7px;gap:12px;flex:none;white-space:nowrap}.tools button{display:flex;align-items:center;gap:4px}
.nav{display:flex;gap:16px;margin-right:1px}.nav button:last-child{margin-left:-4px}
.hs{height:4px;width:878px;margin:0 0 3px 12px;border-radius:2px;background:#ebebeb;flex:none}`,
`<header>${GRIP}<span>编辑钢筋</span><button aria-label="关闭">${CLOSE}</button></header>
<div class="tools"><div class="nav"><button aria-label="首行">${svg(16,16,'<path d="M1.500 2v12M10 3v10L4 8z" stroke="#bbb"/>')}</button><button aria-label="上一行">${svg(16,16,'<path d="M9 3v10L3 8z" stroke="#bbb"/>')}</button><button aria-label="下一行">${svg(16,16,`<path d="M3 3v10l6-5z" stroke="${B}"/>`)}</button><button aria-label="末行">${svg(16,16,`<path d="M1 3v10l6-5zM10 2v12" stroke="${B}"/>`)}</button><button aria-label="上移">${svg(16,16,'<path d="M1 1h14v14H1zM8 12V4M5 7l3-3 3 3" stroke="#bbb"/>')}</button></div>
<button aria-label="下移">${svg(16,16,`<rect x="1" y="1" width="14" height="14" rx="1"/><path d="M8 4v8M5 9l3 3 3-3" stroke="${B}"/>`)}</button>
${T(`<path d="M0 2h10M0 13h10M2 5h7v5H2z"/><path d="M10 7.500h6M13 5l3 2.500-3 2.500" stroke="${B}"/>`,'插入')}
${T('<path d="M1 3.500h14M5 3V1h6v2M3 4v10q0 1 1 1h8q1 0 1-1V4"/><path d="M6.500 7v5M9.500 7v5" stroke="#e02020"/>','删除')}
${T(`<path d="M2 1v10M6 3v8M9 5v6M12 7v4M14 9v2"/><path d="M1 14h13M3 12l-2 2 2 2M12 12l2 2-2 2" stroke="${B}"/>`,'缩尺配筋')}
${T(`<path d="M8 15H1V1h13v6M4 4h7M4 8h4M4 12h2"/><circle cx="12" cy="11.500" r="3" stroke="${B}" stroke-dasharray="2 1" stroke-width="2"/>`,'钢筋信息')}
${T(`<rect x="1" y="1" width="14" height="14" rx="2"/><path d="M5 11V4h3v7M8 7h3v4"/><path d="M4 13h8" stroke="${B}"/>`,'钢筋图库')}
<button><span>其他</span><svg width="5" height="4"><path d="M0 0h5L2.500 4z" fill="#888"/></svg></button><span>单构件钢筋总重(kg)：43.164</span></div>
<rebar-table></rebar-table><div class="hs"></div>`);

/* ---------- display settings ---------- */
const TREE=[['轴线',['轴网','辅助轴线']],['柱',['柱','构造柱','砌体柱','约束边缘非阴...']],['墙',['剪力墙','人防门框墙','砌体墙','砌体加筋','保温墙','暗梁','墙垛','幕墙']],['门窗洞',['门','窗','门联窗','墙洞','带形窗','带形洞','飘窗','老虎窗','过梁','壁龛']],['梁',['梁','连梁','圈梁']],['板',[]]];
const TOG='<button class="t" aria-label="折叠"></button>';
const trow=(pre,t,c='')=>`<tr><td><div>${pre}<span>${t}</span></div></td><td class="${c}"></td></tr>`;
const ln=(w,d)=>`<svg width="${w}" height="20" stroke="#dcdcdc" fill="none"><path d="${d}"/></svg>`;
define('display-panel',`:host{display:block;width:157px;border:1px solid #c9c9c9;border-right:0;background:#fff;flex:none;overflow:hidden}
header{display:flex;align-items:center;gap:13px;height:29px;padding-left:6px;background:var(--head)}
.tabs{display:flex;gap:3px;height:26px;padding:3px 0 0 2px;border-bottom:1px solid #ccc}.tabs button{width:61px;height:22px;background:#dcdcdc;border-radius:3px 3px 0 0;margin-top:1px}.tabs .on{background:#fff;color:var(--blue);border:1px solid #ccc;border-bottom:0;height:23px;margin-top:0}
.wrap{height:724px;margin:2px 0 0 2px;overflow:hidden;border:1px solid #d4d4d4;border-right:0}
table{border-collapse:separate;border-spacing:0;table-layout:fixed;width:100%}th,td{height:21px;padding:0;border:solid #dcdcdc;border-width:0 1px 1px 0;font-weight:400}
th{padding-top:1px}th:last-child{background:#80b9fa;color:#fff;font-weight:700;text-align:left;padding-left:7px;overflow:hidden}td div{display:flex;align-items:center;height:20px;white-space:nowrap}
td span{margin-left:6px;padding-top:1px}.t{width:13px;height:13px;border:1px solid #8a8a8a;border-radius:2px;display:flex;align-items:center;justify-content:center;flex:none}.t:after{content:"";width:5px;height:1px;background:#444}
.cur{border-left:2px solid #808080;border-bottom:2px solid #808080}`,
`<header>${GRIP}<span>显示设置</span></header><div class="tabs"><button class="on">图元显示</button><button>楼层显示</button></div>
<div class="wrap"><table><colgroup><col style="width:133px"><col></colgroup><thead><tr><th>图层构件</th><th>显</th></tr></thead><tbody>
${trow(ln(2,'')+TOG,'所有构件','cur')}${TREE.map(g=>trow(ln(12,'M8.500 0v20M9 10h3')+TOG,g[0])+g[1].map((t,i)=>trow(ln(35,`M8.500 0v20M18.500 0V${i==g[1].length-1?10:20}M18 10.500h17`),t)).join('')).join('')}</tbody></table></div>`);

define('status-bar',`:host{display:flex;align-items:center;height:34px;background:#fcfcfc;border-bottom:2px solid #1f2f3d;flex:none;white-space:nowrap}
.txt{display:flex;width:437px;padding-top:1px}.txt span:nth-child(1){width:77px}.txt span:nth-child(2){width:140px}.txt span:nth-child(3){width:110px}
.b{display:flex;gap:3px;align-items:center;padding-top:1px}.b button{display:flex;align-items:center;justify-content:center;gap:8px;width:25px;height:25px;border:1px solid #999;border-radius:3px}.b .w{width:36px}.b .on{background:#d6e6fb;border-color:#2b7de0}.b .x{margin:0 3px;border-color:#bbb}.b .f{border:0;margin-left:8px}
span{white-space:pre}`,
`<div class="txt"><span>高： 1.5</span><span>标高：  0~1.5</span><span>选中图元：1(8)</span><span>隐藏图元：0</span></div><div class="b">
<button aria-label="正交">${svg(16,16,'<path d="M2 1v13h13M2 9h5v5"/>')}</button><button class="w on" aria-label="矩形">${svg(16,16,`<path d="M4 2h9q2 0 2 2v9q0 2-2 2H4q-2 0-2-2V4"/><circle cx="2" cy="2" r="1.500" stroke="${B}"/>`)}${CARET5}</button>
<button class="x" aria-label="交点">${svg(16,16,'<path d="M0 0l16 16M16 0L0 16" stroke="#777" stroke-width="1"/>')}</button>
<button class="w" aria-label="角度">${svg(16,16,'<path d="M1 12L13 1"/><path d="M1 14h15" stroke="#aab0bd" stroke-width="2"/><circle cx="6" cy="8" r="1.500"/>')}${CARET5}</button>
<button class="w" aria-label="偏移">${svg(16,16,'<path d="M0 5h8M4 1v8"/><path d="M6 10h10v4H6z" fill="#4d566b"/><path d="M12 11.500h3" stroke="#fff"/>')}${CARET5}</button>
<button aria-label="图层">${svg(16,16,'<path d="M3 3h8v8H3z" fill="#4d566b" stroke="none"/><path d="M15 3v6M13 1H1v12h7M15 3h-2M4 15h5"/><path d="M9 8v7l6-3z" fill="#4d566b" stroke="#fff" stroke-width="1"/>')}</button>
<button aria-label="弧线">${svg(16,16,'<path d="M1 14Q2 6 5 4L13 2"/><circle cx="14" cy="2" r="1"/><path d="M10 9v6l5-3z" fill="#4d566b" stroke="none"/>')}</button>
<button class="f" aria-label="全屏">${svg(16,16,'<path d="M1 10v5h5M10 1h5v5M1 15l5-5M15 1l-5 5M7 9l2-2" stroke="#222"/>')}</button></div>`);

define('speed-ball',`:host{display:block;width:60px;height:60px}svg{display:block;filter:drop-shadow(0 0 2px #777)}`,
 `<svg width="60" height="60" viewBox="0 0 60 60"><circle cx="30" cy="30" r="29.500" fill="#555b6b" stroke="#3c4250"/><path d="M29 5h6" stroke="#3fe0d0" stroke-width="2"/><path d="M18 53Q30 58 42 53" stroke="#e6d83c" stroke-width="2" fill="none"/><text x="12" y="37" font-family="Open Sans,sans-serif" font-size="21" font-weight="300" fill="#fff">57</text></svg>`);
define('app-shell',`:host{display:flex;flex-direction:column;height:100vh;overflow:hidden;position:relative}
main{display:flex;gap:4px;flex:1;min-height:0}.mid{width:281px;display:flex;flex-direction:column;gap:4px;flex:none}.center{flex:1;min-width:0;display:flex;flex-direction:column;gap:4px}
speed-ball{position:absolute;right:-27px;bottom:31px}`,
`<top-tabs></top-tabs><app-ribbon></app-ribbon><selector-bar></selector-bar><main><nav-panel></nav-panel><div class="mid"><component-panel></component-panel><property-panel></property-panel></div>
<div class="center"><model-view></model-view><rebar-editor></rebar-editor></div><display-panel></display-panel></main><status-bar></status-bar><speed-ball></speed-ball>`);
</script>
</body>
</html>
